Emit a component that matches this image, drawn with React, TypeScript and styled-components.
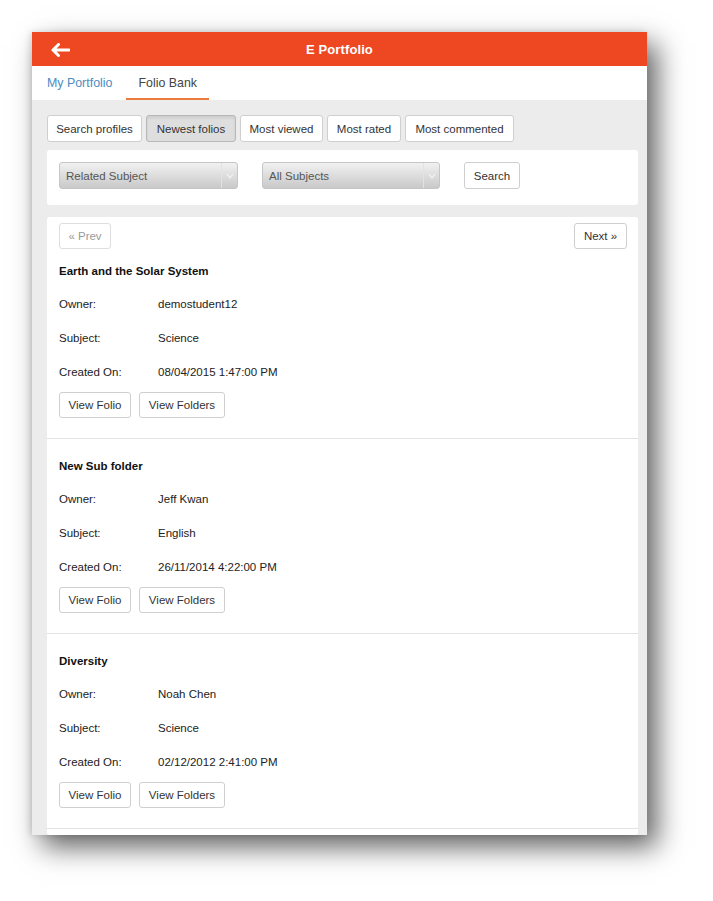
import React from "react";
import styled, { createGlobalStyle } from "styled-components";

const Global = createGlobalStyle`
  html, body { margin: 0; padding: 0; background: #ffffff; }
  body { font-family: "Liberation Sans", Arial, Helvetica, sans-serif; -webkit-font-smoothing: antialiased; }
  * { box-sizing: border-box; }
`;

const Page = styled.div`
  padding: 32px 0 0 32px;
  width: 713px;
  height: 901px;
  overflow: hidden;
`;

const Frame = styled.div`
  width: 615px;
  height: 803px;
  overflow: hidden;
  background: #ececec;
  box-shadow: 10px 12px 26px rgba(0, 0, 0, 0.62), -2px 0 6px rgba(0, 0, 0, 0.12);
  display: flex;
  flex-direction: column;
`;

const Header = styled.header`
  height: 34px;
  flex: none;
  background: #ee4822;
  display: grid;
  grid-template-columns: 60px 1fr 60px;
  align-items: center;
  color: #fff;
`;

const BackButton = styled.div`
  display: flex;
  align-items: center;
  padding-left: 19px;
  padding-top: 1px;
`;

const Title = styled.div`
  text-align: center;
  font-weight: bold;
  font-size: 13px;
  letter-spacing: 0.1px;
  padding-top: 1px;
`;

const TabBar = styled.nav`
  height: 34px;
  flex: none;
  background: #fff;
  display: flex;
  padding-left: 3px;
  gap: 2px;
`;

const Tab = styled.div<{ $active?: boolean }>`
  padding: 2px 12px 0;
  display: flex;
  align-items: center;
  font-size: 12.4px;
  color: ${(p) => (p.$active ? "#444" : "#4d8cc2")};
  border-bottom: 2px solid ${(p) => (p.$active ? "#ec7a3c" : "transparent")};
`;

const Content = styled.main`
  flex: 1;
  padding: 15px 9px 0 15px;
  display: flex;
  flex-direction: column;
`;

const FilterRow = styled.div`
  display: flex;
  gap: 4px;
`;

const Btn = styled.button<{ $active?: boolean; $disabled?: boolean; $w?: number; $h?: number }>`
  height: ${(p) => p.$h ?? 27}px;
  padding: 0 10px;
  font-family: inherit;
  font-size: 11.5px;
  color: ${(p) => (p.$disabled ? "#9a9a9a" : "#333")};
  background: ${(p) => (p.$active ? "#dedede" : "#fff")};
  border: 1px solid ${(p) => (p.$active ? "#b8b8b8" : p.$disabled ? "#dedede" : "#cfcfcf")};
  border-radius: 3px;
  box-shadow: ${(p) => (p.$active ? "inset 0 2px 3px rgba(0,0,0,0.08)" : "none")};
  white-space: nowrap;
  cursor: pointer;
  ${(p) => (p.$w ? `width: ${p.$w}px; padding: 0;` : "")}
`;

const Panel = styled.section`
  margin-top: 8px;
  background: #fff;
  border-radius: 3px;
  height: 55px;
  padding: 12px 12px 0;
  display: flex;
  align-items: flex-start;
  gap: 24px;
`;

const Select = styled.div<{ $w: number }>`
  width: ${(p) => p.$w}px;
  height: 27px;
  border-radius: 3px;
  border: 1px solid #c6c6c6;
  background: linear-gradient(#f1f1f1, #c9c9c9);
  display: flex;
  align-items: stretch;
  font-size: 11.5px;
  color: #555;
`;

const SelectText = styled.div`
  flex: 1;
  display: flex;
  align-items: center;
  padding-left: 6px;
`;

const SelectArrow = styled.div`
  width: 16px;
  border-left: 1px solid #e2e2e2;
  display: flex;
  align-items: center;
  justify-content: center;
`;

const ListCard = styled.section`
  margin-top: 12px;
  background: #fff;
  border-radius: 3px;
  padding: 6px 11px 0 12px;
  flex: 1;
`;

const Pager = styled.div`
  display: flex;
  justify-content: space-between;
`;

const Item = styled.article<{ $first?: boolean }>`
  padding: ${(p) => (p.$first ? "15px" : "20px")} 11px 20px 12px;
  border-bottom: 1px solid #e3e3e3;
  margin: 0 -11px 0 -12px;
`;

const ItemTitle = styled.h3`
  margin: 0 0 9px;
  font-size: 11.5px;
  line-height: 14px;
  font-weight: bold;
  color: #111;
`;

const InfoRow = styled.div`
  display: grid;
  grid-template-columns: 99px 1fr;
  height: 34px;
  align-items: center;
  font-size: 11.5px;
  color: #222;
`;

const Actions = styled.div`
  margin-top: 3px;
  display: flex;
  gap: 8px;
`;

const Chevron = () => (
  <svg width="8" height="6" viewBox="0 0 8 6">
    <path d="M1 1 L4 5 L7 1" fill="none" stroke="#f4f4f4" strokeWidth="1.2" />
  </svg>
);

const BackArrow = () => (
  <svg width="19" height="14" viewBox="0 0 19 14">
    <path d="M7.5 1.5 L2 7 L7.5 12.5 M2.5 7 H18" fill="none" stroke="#fff" strokeWidth="3" strokeLinecap="round" strokeLinejoin="round" />
  </svg>
);

const folios = [
  { title: "Earth and the Solar System", owner: "demostudent12", subject: "Science", created: "08/04/2015 1:47:00 PM" },
  { title: "New Sub folder", owner: "Jeff Kwan", subject: "English", created: "26/11/2014 4:22:00 PM" },
  { title: "Diversity", owner: "Noah Chen", subject: "Science", created: "02/12/2012 2:41:00 PM" },
];

const filters = [
  { label: "Search profiles", w: 95 },
  { label: "Newest folios", w: 90 },
  { label: "Most viewed", w: 83 },
  { label: "Most rated", w: 74 },
  { label: "Most commented", w: 109 },
];

export default function App() {
  return (
    <>
      <Global />
      <Page>
        <Frame>
          <Header>
            <BackButton>
              <BackArrow />
            </BackButton>
            <Title>E Portfolio</Title>
            <div />
          </Header>
          <TabBar>
            <Tab>My Portfolio</Tab>
            <Tab $active>Folio Bank</Tab>
          </TabBar>
          <Content>
            <FilterRow>
              {filters.map((f) => (
                <Btn key={f.label} $w={f.w} $active={f.label === "Newest folios"}>
                  {f.label}
                </Btn>
              ))}
            </FilterRow>
            <Panel>
              <Select $w={179}>
                <SelectText>Related Subject</SelectText>
                <SelectArrow>
                  <Chevron />
                </SelectArrow>
              </Select>
              <Select $w={178}>
                <SelectText>All Subjects</SelectText>
                <SelectArrow>
                  <Chevron />
                </SelectArrow>
              </Select>
              <Btn $w={56}>Search</Btn>
            </Panel>
            <ListCard>
              <Pager>
                <Btn $disabled $w={52} $h={26}>« Prev</Btn>
                <Btn $w={53} $h={26}>Next »</Btn>
              </Pager>
              {folios.map((f, i) => (
                <Item key={f.title} $first={i === 0}>
                  <ItemTitle>{f.title}</ItemTitle>
                  <InfoRow>
                    <span>Owner:</span>
                    <span>{f.owner}</span>
                  </InfoRow>
                  <InfoRow>
                    <span>Subject:</span>
                    <span>{f.subject}</span>
                  </InfoRow>
                  <InfoRow>
                    <span>Created On:</span>
                    <span>{f.created}</span>
                  </InfoRow>
                  <Actions>
                    <Btn $w={72} $h={26}>View Folio</Btn>
                    <Btn $w={86} $h={26}>View Folders</Btn>
                  </Actions>
                </Item>
              ))}
            </ListCard>
          </Content>
        </Frame>
      </Page>
    </>
  );
}
